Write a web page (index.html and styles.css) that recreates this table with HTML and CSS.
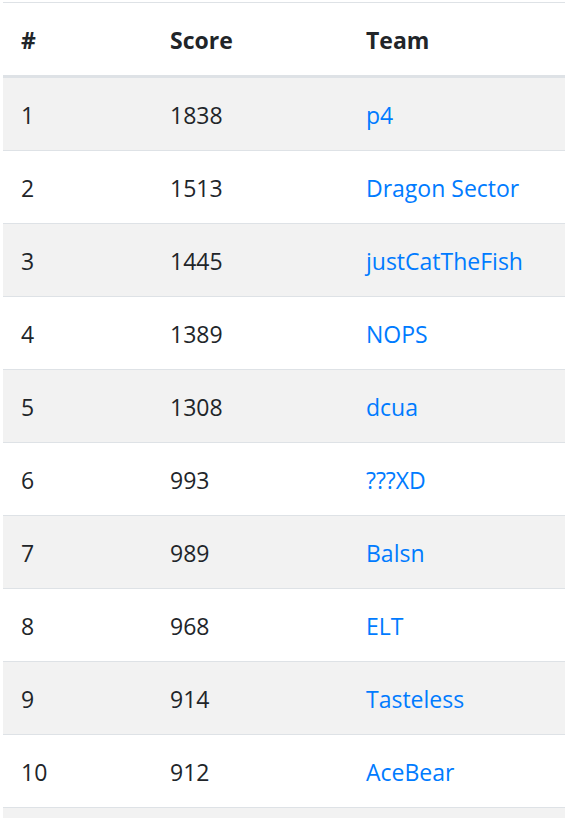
FILE: index.html
```html
<!DOCTYPE html>
<html>
<head>
<meta charset="utf-8">
<link rel="stylesheet" href="styles.css">
</head>
<body>
<table class="board">
  <thead>
    <tr><th class="c-rank">#</th><th class="c-score">Score</th><th class="c-team">Team</th></tr>
  </thead>
  <tbody>
    <tr><td>1</td><td>1838</td><td><a href="#">p4</a></td></tr>
    <tr><td>2</td><td>1513</td><td><a href="#">Dragon Sector</a></td></tr>
    <tr><td>3</td><td>1445</td><td><a href="#">justCatTheFish</a></td></tr>
    <tr><td>4</td><td>1389</td><td><a href="#">NOPS</a></td></tr>
    <tr><td>5</td><td>1308</td><td><a href="#">dcua</a></td></tr>
    <tr><td>6</td><td>993</td><td><a href="#">???XD</a></td></tr>
    <tr><td>7</td><td>989</td><td><a href="#">Balsn</a></td></tr>
    <tr><td>8</td><td>968</td><td><a href="#">ELT</a></td></tr>
    <tr><td>9</td><td>914</td><td><a href="#">Tasteless</a></td></tr>
    <tr><td>10</td><td>912</td><td><a href="#">AceBear</a></td></tr>
    <tr class="next"><td></td><td></td><td></td></tr>
  </tbody>
</table>
</body>
</html>
```
FILE: styles.css
```css
html, body {
  margin: 0;
  padding: 0;
  background: #fff;
  overflow: hidden;
}
body {
  padding: 2px 0 0 3px;
  font-family: "Segoe UI", "Open Sans", sans-serif;
  font-size: 23px;
  line-height: 36px;
  color: #212529;
}
.board {
  border-collapse: collapse;
  width: 800px;
  table-layout: fixed;
}
.board th, .board td {
  padding: 19px 18px 17px;
  text-align: left;
  vertical-align: top;
  border-top: 1px solid #dee2e6;
  white-space: nowrap;
}
.board th {
  font-weight: 700;
  border-bottom: 3px solid #dee2e6;
}
.board .next td {
  height: 36px;
}
.c-rank { width: 113px; }
.c-score { width: 160px; }
.board tbody tr:nth-child(odd) {
  background: #f2f2f2;
}
.board a {
  color: #007bff;
  text-decoration: none;
}
```
